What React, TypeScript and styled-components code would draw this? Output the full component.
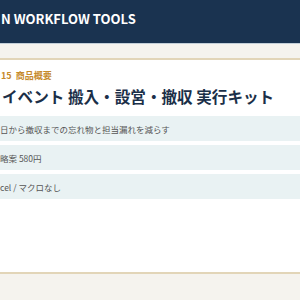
import React from "react";
import styled, { createGlobalStyle } from "styled-components";

const GlobalStyle = createGlobalStyle`
    html, body {
        margin: 0;
        padding: 0;
        background: #f5f3ee;
        overflow: hidden;
    }

    body {
        font-family: "Noto Sans CJK JP", "Noto Sans", sans-serif;
    }
`;

const Header = styled.header`
    height: 44px;
    background: #1a3350;
    border-bottom: 1px solid #c3cfd8;
    box-sizing: border-box;
    padding-top: 10px;
`;

const Brand = styled.div`
    font-size: 13px;
    line-height: 17px;
    font-weight: 700;
    color: #ffffff;
    margin-left: 1px;
    white-space: nowrap;
`;

const Strip = styled.div`
    height: 14px;
    background: #f5f3ee;
    border-bottom: 2px solid #e2d5b8;
`;

const Sheet = styled.main`
    background: #ffffff;
    padding: 9px 0 73px;
    border-bottom: 2px solid #e2d5b8;
`;

const Eyebrow = styled.div`
    display: flex;
    gap: 4px;
    font-size: 9px;
    line-height: 13px;
    font-weight: 700;
    color: #c68a2c;
    margin-left: 1px;
`;

const Title = styled.h1`
    margin: 3px 0 9px 2px;
    font-size: 15.6px;
    line-height: 22px;
    font-weight: 700;
    color: #1b2f48;
    white-space: nowrap;
`;

const Rows = styled.ul`
    list-style: none;
    margin: 0;
    padding: 0;
    display: flex;
    flex-direction: column;
    gap: 4px;
`;

const Row = styled.li<{ $shift: number }>`
    height: 25px;
    display: flex;
    align-items: center;
    background: #e9f2f3;
    font-size: 8.5px;
    color: #555555;
    white-space: nowrap;
    padding-left: ${(p) => p.$shift}px;
`;

const rows = [
    { text: "日から撤収までの忘れ物と担当漏れを減らす", shift: -3 },
    { text: "略案 580円", shift: -1 },
    { text: "cel / マクロなし", shift: 0 },
];

const App = (): JSX.Element => (
    <>
        <GlobalStyle />
        <Header>
            <Brand>N WORKFLOW TOOLS</Brand>
        </Header>
        <Strip />
        <Sheet>
            <Eyebrow>
                <span>15</span>
                <span>商品概要</span>
            </Eyebrow>
            <Title>イベント 搬入・設営・撤収 実行キット</Title>
            <Rows>
                {rows.map((row) => (
                    <Row key={row.text} $shift={row.shift}>
                        {row.text}
                    </Row>
                ))}
            </Rows>
        </Sheet>
    </>
);

export default App;
